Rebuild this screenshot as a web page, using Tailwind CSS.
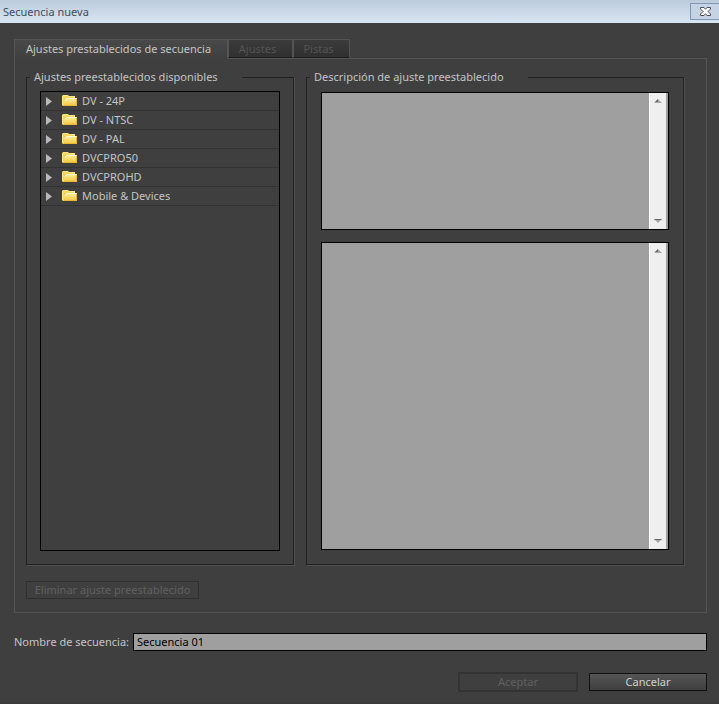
<!DOCTYPE html>
<html lang="es">
<head>
<meta charset="utf-8">
<meta name="viewport" content="width=device-width, initial-scale=1">
<title>Secuencia nueva</title>
<script src="https://cdn.jsdelivr.net/npm/@tailwindcss/browser@4"></script>
</head>
<body class="flex min-h-screen flex-col border-b-2 border-[#3a3838] bg-[#3f3f3f] font-['Noto_Sans','Open_Sans',sans-serif] text-[11px] leading-4 text-[#c4c4c4]">
<svg class="absolute size-0" aria-hidden="true">
  <defs>
    <linearGradient id="gold" x1="0" y1="0" x2="0" y2="1"><stop offset="0" stop-color="#fff0a0"/><stop offset="1" stop-color="#f2c53c"/></linearGradient>
    <symbol id="folder" viewBox="0 0 16 14">
      <path d="M0 11V2L1 1H6L7 2H13V5H3V12H1Z" fill="#f8d75c"/>
      <path d="M0.500 11V2.500L1.500 1.500H5.500L6.500 2.500H12.500V4" fill="none" stroke="#ffe78c"/>
      <path d="M2.500 11V5.500L3.500 4.500H6" fill="none" stroke="#b08a30"/>
      <path d="M2 12V6L4 4H15V12Z" fill="url(#gold)"/>
      <path d="M3 6L4.500 4.500H14.500" fill="none" stroke="#fffbd8"/>
      <path d="M1.500 11.500H14.500V5" fill="none" stroke="#e8b736"/>
    </symbol>
    <symbol id="closed" viewBox="0 0 6 9"><path d="M0 0L6 4.500L0 9Z" fill="#b9b9b9"/></symbol>
    <symbol id="up" viewBox="0 0 8 4"><path d="M4 0L8 4H0Z" fill="#a8a8a8"/><path d="M4 0L1 3H4Z" fill="#666"/></symbol>
    <symbol id="down" viewBox="0 0 8 4"><path d="M0 0H8L4 4Z" fill="#a8a8a8"/><path d="M0 0H8L7 1H1Z" fill="#666"/></symbol>
  </defs>
</svg>

<header class="flex h-[23px] shrink-0 items-start justify-between bg-linear-to-b from-[#bccbdc] to-[#d8e5f3]">
  <h1 class="pt-1 pl-[3px] text-[#414d5c]">Secuencia nueva</h1>
  <button aria-label="Cerrar" class="mt-[3px] flex h-[17px] w-[29px] items-center justify-center border border-r-0 border-[#8096b2] bg-[#c5d3e4]">
    <svg class="h-[9px] w-[11px]" viewBox="0 0 11 9"><path d="M0.500 0.500H4L5.500 2.300L7 0.500H10.500V2L8 4.500L10.500 7V8.500H7L5.500 6.700L4 8.500H0.500V7L3 4.500L0.500 2Z" fill="#fff" stroke="#4a5058"/></svg>
  </button>
</header>

<main class="flex flex-1 flex-col px-3 pt-4 pb-2.5 pl-3.5">
  <div role="tablist" class="z-10 -mb-px flex items-start">
    <button role="tab" aria-selected="true" class="h-5 w-[214px] border border-b-0 border-[#545454] bg-linear-to-b from-[#494949] to-[#3f3f3f] pb-0.5 pl-[11px] text-left">Ajustes prestablecidos de secuencia</button>
    <button role="tab" disabled class="h-[19px] w-[65px] border border-[#545454] border-b-[#1c1c1c] bg-linear-to-b from-[#3b3b3b] to-[#303030] pr-1.5 text-[#545454]">Ajustes</button>
    <button role="tab" disabled class="h-[19px] w-[57px] border border-[#545454] border-b-[#1c1c1c] bg-linear-to-b from-[#3b3b3b] to-[#303030] pr-1.5 text-[#545454]">Pistas</button>
  </div>

  <section role="tabpanel" class="flex flex-1 flex-col border border-[#545454] pt-2.5 pr-[22px] pb-[13px] pl-[11px]">
    <div class="grid flex-1 grid-cols-[268fr_378fr] gap-3">
      <fieldset class="flex min-w-0 flex-col border border-[#222] px-[13px] pb-[13px] shadow-[1px_1px_0_#505050]">
        <legend class="-ml-2.5 pr-6 pl-1">Ajustes preestablecidos disponibles</legend>
        <ul class="mt-1.5 flex-1 border border-black">
          <li class="flex h-[19px] items-center border-b border-[#323232] pl-[5px]"><button aria-label="Expandir DV - 24P"><svg class="h-[9px] w-1.5"><use href="#closed"/></svg></button><svg class="mr-1 ml-2.5 h-3.5 w-4"><use href="#folder"/></svg>DV - 24P</li>
          <li class="flex h-[19px] items-center border-b border-[#323232] pl-[5px]"><button aria-label="Expandir DV - NTSC"><svg class="h-[9px] w-1.5"><use href="#closed"/></svg></button><svg class="mr-1 ml-2.5 h-3.5 w-4"><use href="#folder"/></svg>DV - NTSC</li>
          <li class="flex h-[19px] items-center border-b border-[#323232] pl-[5px]"><button aria-label="Expandir DV - PAL"><svg class="h-[9px] w-1.5"><use href="#closed"/></svg></button><svg class="mr-1 ml-2.5 h-3.5 w-4"><use href="#folder"/></svg>DV - PAL</li>
          <li class="flex h-[19px] items-center border-b border-[#323232] pl-[5px]"><button aria-label="Expandir DVCPRO50"><svg class="h-[9px] w-1.5"><use href="#closed"/></svg></button><svg class="mr-1 ml-2.5 h-3.5 w-4"><use href="#folder"/></svg>DVCPRO50</li>
          <li class="flex h-[19px] items-center border-b border-[#323232] pl-[5px]"><button aria-label="Expandir DVCPROHD"><svg class="h-[9px] w-1.5"><use href="#closed"/></svg></button><svg class="mr-1 ml-2.5 h-3.5 w-4"><use href="#folder"/></svg>DVCPROHD</li>
          <li class="flex h-[19px] items-center border-b border-[#323232] pl-[5px]"><button aria-label="Expandir Mobile &amp; Devices"><svg class="h-[9px] w-1.5"><use href="#closed"/></svg></button><svg class="mr-1 ml-2.5 h-3.5 w-4"><use href="#folder"/></svg>Mobile &amp; Devices</li>
        </ul>
      </fieldset>

      <fieldset class="flex min-w-0 flex-col border border-[#222] px-3.5 pb-3.5 shadow-[1px_1px_0_#505050]">
        <legend class="-ml-[11px] pr-6 pl-1">Descripción de ajuste preestablecido</legend>
        <div class="mt-[7px] flex h-[138px] border border-black bg-[#9f9f9f] pr-0.5">
          <textarea readonly aria-label="Descripción" class="min-w-0 flex-1 resize-none p-1 text-black outline-none"></textarea>
          <div class="flex w-[17px] flex-col items-center justify-between border-l border-white bg-[#efefef] py-1.5">
            <button aria-label="Subir"><svg class="h-1 w-2"><use href="#up"/></svg></button>
            <button aria-label="Bajar"><svg class="h-1 w-2"><use href="#down"/></svg></button>
          </div>
        </div>
        <div class="mt-3 flex flex-1 border border-black bg-[#9f9f9f] pr-0.5">
          <textarea readonly aria-label="Ajustes del preestablecido" class="min-w-0 flex-1 resize-none p-1 text-black outline-none"></textarea>
          <div class="flex w-[17px] flex-col items-center justify-between border-l border-white bg-[#efefef] py-1.5">
            <button aria-label="Subir"><svg class="h-1 w-2"><use href="#up"/></svg></button>
            <button aria-label="Bajar"><svg class="h-1 w-2"><use href="#down"/></svg></button>
          </div>
        </div>
      </fieldset>
    </div>
    <button disabled class="mt-4 flex h-[18px] w-[173px] items-center justify-center self-start border border-[#2f2f2f] text-[#606060]">Eliminar ajuste preestablecido</button>
  </section>

  <div class="mt-5 flex items-center">
    <label for="name" class="w-[119px] shrink-0 whitespace-nowrap">Nombre de secuencia:</label>
    <input id="name" type="text" value="Secuencia 01" class="h-[18px] min-w-0 flex-1 border border-black bg-[#9f9f9f] px-[3px] pb-0.5 text-black outline-none">
  </div>
  <div class="mt-[21px] flex items-center justify-end gap-[11px]">
    <button disabled class="flex h-5 w-[120px] items-center justify-center border-2 border-[#333] text-[#606060]">Aceptar</button>
    <button class="flex h-[18px] w-[118px] items-center justify-center border border-[#111] bg-linear-to-b from-[#555] to-[#3f3f3f] text-[#d0d0d0]">Cancelar</button>
  </div>
</main>
</body>
</html>
